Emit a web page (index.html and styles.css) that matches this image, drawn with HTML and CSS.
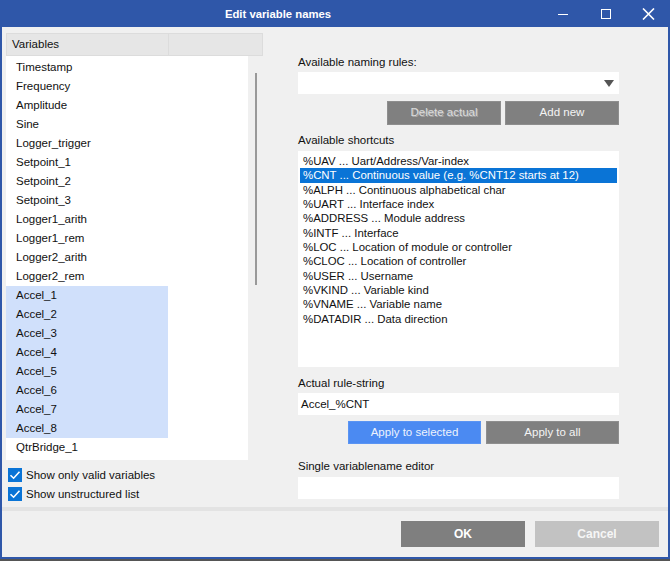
FILE: index.html
```html
<!DOCTYPE html>
<html lang="en">
<head>
    <meta charset="UTF-8">
    <title>Edit variable names</title>
    <link rel="stylesheet" href="styles.css">
</head>
<body>

<div class="window">
    <div class="titlebar">
        <span class="title">Edit variable names</span>
        <div class="controls">
            <span class="ctl"><svg width="12" height="12" viewBox="0 0 12 12"><line x1="1" y1="6.5" x2="11" y2="6.5" stroke="#fff" stroke-width="1"/></svg></span>
            <span class="ctl"><svg width="12" height="12" viewBox="0 0 12 12"><rect x="1.5" y="1.5" width="9" height="9" fill="none" stroke="#fff" stroke-width="1"/></svg></span>
            <span class="ctl"><svg width="13" height="12" viewBox="0 0 13 12"><path d="M1 0.5 L12 11.5 M12 0.5 L1 11.5" stroke="#fff" stroke-width="1.6"/></svg></span>
        </div>
    </div>

    <div class="main">
        <div class="left">
            <div class="list-head">
                <div class="head-cell first">Variables</div>
                <div class="head-cell"></div>
            </div>
            <div class="list-wrap">
                <div class="var-list">
                    <div class="var">Timestamp</div>
                    <div class="var">Frequency</div>
                    <div class="var">Amplitude</div>
                    <div class="var">Sine</div>
                    <div class="var">Logger_trigger</div>
                    <div class="var">Setpoint_1</div>
                    <div class="var">Setpoint_2</div>
                    <div class="var">Setpoint_3</div>
                    <div class="var">Logger1_arith</div>
                    <div class="var">Logger1_rem</div>
                    <div class="var">Logger2_arith</div>
                    <div class="var">Logger2_rem</div>
                    <div class="var sel">Accel_1</div>
                    <div class="var sel">Accel_2</div>
                    <div class="var sel">Accel_3</div>
                    <div class="var sel">Accel_4</div>
                    <div class="var sel">Accel_5</div>
                    <div class="var sel">Accel_6</div>
                    <div class="var sel">Accel_7</div>
                    <div class="var sel">Accel_8</div>
                    <div class="var">QtrBridge_1</div>
                </div>
                <div class="scroll"><div class="thumb"></div></div>
            </div>
            <label class="check"><span class="box"><svg width="14" height="14" viewBox="0 0 14 14"><path d="M2.5 7.2 L5.6 10.2 L11.5 3.8" fill="none" stroke="#fff" stroke-width="1.6"/></svg></span>Show only valid variables</label>
            <label class="check"><span class="box"><svg width="14" height="14" viewBox="0 0 14 14"><path d="M2.5 7.2 L5.6 10.2 L11.5 3.8" fill="none" stroke="#fff" stroke-width="1.6"/></svg></span>Show unstructured list</label>
        </div>

        <div class="right">
            <div class="label l1">Available naming rules:</div>
            <div class="combo"><span class="arrow"></span></div>
            <div class="btn-row r1">
                <button class="btn gray disabled">Delete actual</button>
                <button class="btn gray">Add new</button>
            </div>
            <div class="label l2">Available shortcuts</div>
            <div class="shortcuts">
                <div class="sc">%UAV ... Uart/Address/Var-index</div>
                <div class="sc active">%CNT ... Continuous value (e.g. %CNT12 starts at 12)</div>
                <div class="sc">%ALPH ... Continuous alphabetical char</div>
                <div class="sc">%UART ... Interface index</div>
                <div class="sc">%ADDRESS ... Module address</div>
                <div class="sc">%INTF ... Interface</div>
                <div class="sc">%LOC ... Location of module or controller</div>
                <div class="sc">%CLOC ... Location of controller</div>
                <div class="sc">%USER ... Username</div>
                <div class="sc">%VKIND ... Variable kind</div>
                <div class="sc">%VNAME ... Variable name</div>
                <div class="sc">%DATADIR ... Data direction</div>
            </div>
            <div class="label l3">Actual rule-string</div>
            <div class="field f1">Accel_%CNT</div>
            <div class="btn-row r2">
                <button class="btn blue">Apply to selected</button>
                <button class="btn gray">Apply to all</button>
            </div>
            <div class="label l4">Single variablename editor</div>
            <div class="field f2"></div>
        </div>
    </div>

    <div class="sep"></div>
    <div class="footer">
        <button class="foot-btn ok">OK</button>
        <button class="foot-btn cancel">Cancel</button>
    </div>
</div>

</body>
</html>
```

FILE: styles.css
```css
body {
    margin: 0;
    padding: 0;
    background-color: #555;
    font-family: 'Liberation Sans', Arial, sans-serif;
    font-size: 11.5px;
    color: #111;
}

.window {
    width: 670px;
    height: 559px;
    box-sizing: border-box;
    border: 2px solid #2f57a9;
    border-top: none;
    background-color: #f0f0f0;
    display: flex;
    flex-direction: column;
}

.titlebar {
    height: 27px;
    margin: 0 -2px;
    background-color: #2f57a9;
    display: flex;
    align-items: center;
    flex-shrink: 0;
}

.title {
    flex: 1;
    text-align: center;
    padding-left: 15px;
    color: #fff;
    font-weight: bold;
    font-size: 11.3px;
}

.controls {
    display: flex;
}

.ctl {
    width: 43px;
    height: 27px;
    display: flex;
    align-items: center;
    justify-content: center;
}

.main {
    height: 480px;
    display: flex;
    flex-shrink: 0;
}

/* left side: variables list */
.left {
    width: 257px;
    margin-left: 4px;
    padding-top: 6px;
}

.list-head {
    display: flex;
    height: 23px;
    box-sizing: border-box;
    background-color: #e6e6e6;
    border: 1px solid #dcdcdc;
}

.head-cell {
    flex: 1;
    line-height: 21px;
    padding-left: 5px;
}

.head-cell.first {
    flex: none;
    width: 156px;
    border-right: 1px solid #dcdcdc;
}

.list-wrap {
    display: flex;
}

.var-list {
    width: 242px;
    height: 404px;
    box-sizing: border-box;
    padding-top: 1.5px;
    background-color: #fff;
}

.var {
    width: 162px;
    height: 19px;
    line-height: 18px;
    padding-left: 10px;
    box-sizing: border-box;
}

.var.sel {
    background-color: #d0e0fb;
}

.scroll {
    width: 15px;
}

.thumb {
    width: 2px;
    height: 212px;
    margin-top: 17px;
    margin-left: 7px;
    background-color: #999;
}

.check {
    display: flex;
    align-items: center;
    height: 19px;
    padding-left: 2px;
}

.check:first-of-type {
    margin-top: 5px;
}

.box {
    width: 14px;
    height: 14px;
    background-color: #0a74d6;
    margin-right: 4px;
    display: flex;
}

/* right side */
.right {
    width: 321px;
    margin-left: 35px;
}

.label {
    height: 14px;
    line-height: 14px;
}

.l1 { margin-top: 28px; }
.l2 { margin-top: 8px; }
.l3 { margin-top: 9px; }
.l4 { margin-top: 15px; }

.combo {
    height: 22px;
    margin-top: 3px;
    background-color: #fff;
    display: flex;
    align-items: center;
    justify-content: flex-end;
    padding-right: 5px;
}

.arrow {
    width: 0;
    height: 0;
    border-left: 5px solid transparent;
    border-right: 5px solid transparent;
    border-top: 7px solid #555;
}

.btn-row {
    display: flex;
    justify-content: flex-end;
}

.r1 {
    margin-top: 7px;
    gap: 4px;
}

.r2 {
    margin-top: 6px;
    gap: 5px;
}

.btn {
    border: 1px solid #8e8e8e;
    font-family: inherit;
    font-size: 11.5px;
    padding: 0 0 2px;
    cursor: pointer;
}

.r1 .btn {
    width: 114px;
    height: 24px;
}

.r2 .btn {
    width: 133px;
    height: 23px;
}

.btn.gray {
    background-color: #808080;
    color: #f4f4f4;
}

.btn.gray.disabled {
    color: #dcdcdc;
    text-shadow: 1px 1px 0 #a8a8a8;
}

.btn.blue {
    background-color: #4b8af2;
    border-color: #5a94f3;
    color: #eef3fd;
}

.shortcuts {
    height: 216px;
    margin-top: 4px;
    padding: 3px 2px 0;
    box-sizing: border-box;
    background-color: #fff;
    font-size: 11.4px;
}

.sc {
    height: 14.33px;
    line-height: 14.33px;
    padding-left: 3px;
    white-space: nowrap;
}

.sc.active {
    background-color: #0a74d6;
    color: #fff;
}

.field {
    height: 22px;
    line-height: 22px;
    padding-left: 3px;
    background-color: #fff;
}

.f1 { margin-top: 3px; }
.f2 { margin-top: 4px; }

.sep {
    height: 4px;
    background-color: #e3e3e3;
    flex-shrink: 0;
}

.footer {
    height: 46px;
    display: flex;
    align-items: center;
    justify-content: flex-end;
    gap: 10px;
    padding-right: 9px;
}

.foot-btn {
    width: 124px;
    height: 26px;
    border: none;
    font-family: inherit;
    font-weight: bold;
    font-size: 12px;
    color: #fff;
    cursor: pointer;
}

.foot-btn.ok {
    background-color: #7f7f7f;
}

.foot-btn.cancel {
    background-color: #c2c2c2;
    color: #f6f6f6;
}
```
